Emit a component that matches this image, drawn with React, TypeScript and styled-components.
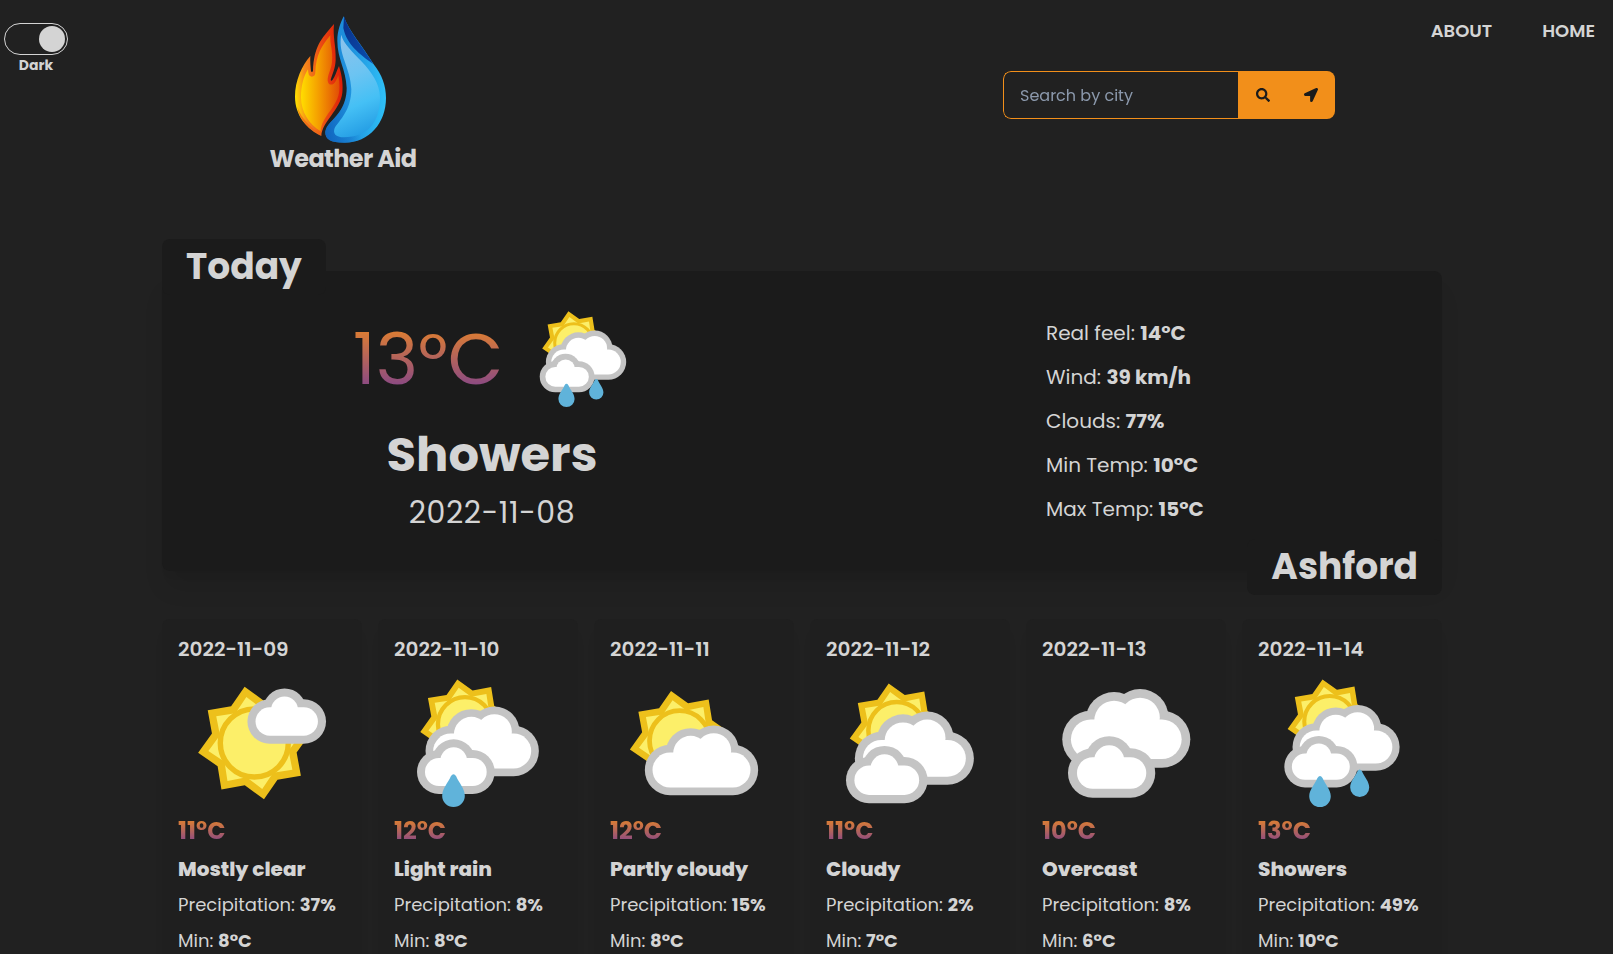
import React from "react";
import styled, { createGlobalStyle } from "styled-components";
import { FaLocationArrow, FaSearch } from "react-icons/fa";

const GlobalStyle = createGlobalStyle`
  *, *::before, *::after { box-sizing: border-box; }
  body {
    margin: 0;
    background: #212121;
    color: #d4d4d4;
    font-family: Poppins, Inter, "Liberation Sans", sans-serif;
  }
  h1, h2, h3, p, ul { margin: 0; padding: 0; }
`;

const Page = styled.div`
  height: 100vh;
  overflow: hidden;
  display: flex;
  flex-direction: column;
`;

/* ---------- header ---------- */

const Header = styled.header`
  height: 239px;
  flex: none;
  display: flex;
  align-items: flex-start;
  padding: 0 18px 0 4px;
`;

const ThemeSwitch = styled.div`
  width: 64px;
  margin-top: 23px;
  display: flex;
  flex-direction: column;
  align-items: center;
`;

const Track = styled.button`
  width: 64px;
  height: 32px;
  padding: 0 2px;
  border: 1px solid #d4d4d4;
  border-radius: 16px;
  background: transparent;
  display: flex;
  align-items: center;
  justify-content: flex-end;
`;

const Knob = styled.span`
  width: 26px;
  height: 26px;
  border-radius: 50%;
  background: #d4d4d4;
`;

const SwitchLabel = styled.span`
  font-size: 14px;
  font-weight: 700;
  line-height: 20px;
`;

const Brand = styled.div`
  width: 150px;
  margin: 10px 0 0 200px;
  display: flex;
  flex-direction: column;
  align-items: center;
`;

const BrandMark = styled.svg`
  width: 120px;
  height: 140px;
  margin-right: 6px;
`;

const BrandName = styled.h1`
  margin-top: -7px;
  font-size: 24px;
  font-weight: 700;
  line-height: 32px;
  letter-spacing: -0.6px;
  white-space: nowrap;
`;

const SearchForm = styled.form`
  width: 332px;
  height: 48px;
  margin: 71px 0 0 585px;
  display: flex;
  border-radius: 8px;
  overflow: hidden;
`;

const SearchInput = styled.input`
  width: 235px;
  border: 1px solid #f28f1a;
  border-right: 0;
  border-radius: 8px 0 0 8px;
  padding: 0 16px;
  background: transparent;
  color: #d4d4d4;
  font: inherit;
  font-size: 16px;
  outline: none;
  &::placeholder { color: #94a3b8; opacity: 0.92; }
`;

const SearchButton = styled.button`
  width: 49px;
  padding: 0 0 0 1px;
  border: 0;
  background: #f28f1a;
  color: #1b1b1b;
  font-size: 14px;
  display: flex;
  align-items: center;
  justify-content: center;
`;

const Nav = styled.nav`
  margin: 17px 0 0 auto;
  display: flex;
  gap: 50px;
`;

const NavLink = styled.a`
  font-size: 18px;
  font-weight: 600;
  line-height: 28px;
`;

/* ---------- today ---------- */

const Main = styled.main`
  width: 1280px;
  margin-left: 162px;
`;

const Today = styled.section`
  position: relative;
  height: 300px;
  margin-top: 32px;
  display: flex;
  padding: 40px 16px 0;
  border-radius: 8px;
  background: #1b1b1b;
  box-shadow: 0 20px 25px -5px rgba(0, 0, 0, 0.1), 0 8px 10px -6px rgba(0, 0, 0, 0.06);
`;

const Tab = styled.h2<{ $place: "top" | "bottom" }>`
  position: absolute;
  ${(p) => (p.$place === "top" ? "top: -32px; left: 0;" : "bottom: -24px; right: 0;")}
  height: 56px;
  padding: 0 24px;
  border-radius: 8px;
  background: #1b1b1b;
  font-size: 36px;
  font-weight: 700;
  line-height: 56px;
`;

const Summary = styled.div`
  width: 628px;
  display: flex;
  flex-direction: column;
  align-items: center;
`;

const SummaryRow = styled.div`
  display: flex;
  align-items: center;
  gap: 32px;
`;

const BigTemp = styled.p`
  font-size: 72px;
  font-weight: 400;
  line-height: 94px;
  white-space: nowrap;
  color: transparent;
  background: linear-gradient(#d97b36 22%, #8b4a83 78%);
  background-clip: text;
  -webkit-background-clip: text;
`;

const Condition = styled.p`
  margin-top: 12px;
  font-size: 48px;
  font-weight: 700;
  line-height: 72px;
`;

const TodayDate = styled.p`
  font-size: 30px;
  line-height: 44px;
  letter-spacing: 0.6px;
`;

const Details = styled.ul`
  margin-left: 240px;
  list-style: none;
`;

const Detail = styled.li`
  height: 44px;
  font-size: 20px;
  line-height: 44px;
  white-space: nowrap;
`;

/* ---------- forecast ---------- */

const Forecast = styled.section`
  margin-top: 48px;
  display: grid;
  grid-template-columns: repeat(6, 200px);
  gap: 16px;
`;

const DayCard = styled.article`
  height: 420px;
  padding: 16px;
  border-radius: 8px;
  background: #1f1f1f;
  box-shadow: 0 10px 15px -3px rgba(0, 0, 0, 0.03);
`;

const DayDate = styled.h3`
  font-size: 20px;
  font-weight: 600;
  line-height: 28px;
  margin-bottom: 16px;
`;

const DayIcon = styled.div`
  display: flex;
  justify-content: center;
`;

const DayTemp = styled.p`
  margin: 6px 0;
  width: max-content;
  font-size: 24px;
  font-weight: 700;
  line-height: 36px;
  color: transparent;
  background: linear-gradient(#d57a39 25%, #8f4c80 76%);
  background-clip: text;
  -webkit-background-clip: text;
`;

const DayCondition = styled.p`
  font-size: 20px;
  font-weight: 800;
  line-height: 28px;
`;

const DayStat = styled.p`
  margin-top: 8px;
  font-size: 18px;
  line-height: 28px;
  white-space: nowrap;
`;

/* ---------- weather drawings ---------- */

const IconSvg = styled.svg<{ $size: number }>`
  display: block;
  overflow: visible;
  width: ${(p) => p.$size}px;
  height: ${(p) => p.$size}px;
`;

const GOLD = "#edc01b";
const LEMON = "#fcef69";
const CLOUD_EDGE = "#c4c4c4";

function star(tip: number, valley: number) {
  const pts: string[] = [];
  for (let i = 0; i < 16; i++) {
    const a = ((-99.8 + i * 22.5) * Math.PI) / 180;
    const r = i % 2 === 0 ? tip : valley;
    pts.push(`${(r * Math.cos(a)).toFixed(2)},${(r * Math.sin(a)).toFixed(2)}`);
  }
  return pts.join(" ");
}

type Placed = { x: number; y: number; s?: number };

function Sun({ x, y, s = 1 }: Placed) {
  return (
    <g transform={`translate(${x} ${y}) scale(${s})`}>
      <polygon points={star(57, 43.4)} fill={GOLD} />
      <polygon points={star(46.6, 35.2)} fill={LEMON} />
      <circle r={34} fill={LEMON} stroke={GOLD} strokeWidth={5.4} />
    </g>
  );
}

function BigCloud({ x, y, s = 1 }: Placed) {
  const layer = (r: number, fill: string) => (
    <g fill={fill}>
      <rect x={-r} y={-r} width={189 + 2 * r} height={2 * r} rx={r} />
      <circle cx={62} cy={-50} r={r} />
      <circle cx={131} cy={-58} r={r} />
    </g>
  );
  return (
    <g transform={`translate(${x} ${y}) scale(${s / 3})`}>
      {layer(75.5, CLOUD_EDGE)}
      {layer(52.5, "#ffffff")}
    </g>
  );
}

function SmallCloud({ x, y, s = 1 }: Placed) {
  const layer = (grow: number, fill: string) => (
    <g fill={fill}>
      <rect x={-42 - grow} y={-42 - grow} width={185 + 2 * grow} height={84 + 2 * grow} rx={42 + grow} />
      <circle cx={44} cy={-34} r={40 + grow} />
    </g>
  );
  return (
    <g transform={`translate(${x} ${y}) scale(${s / 3})`}>
      {layer(24, CLOUD_EDGE)}
      {layer(0, "#ffffff")}
    </g>
  );
}

function Drop({ x, y, s = 1 }: Placed) {
  return (
    <path
      transform={`translate(${x} ${y}) scale(${s / 3})`}
      d="M-8 -58 Q0 -70 8 -58 C16 -38 34 -22 34 0 A34 34 0 0 1 -34 0 C-34 -22 -16 -38 -8 -58Z"
      fill="#60b3da"
    />
  );
}

type Sky = "clear" | "rain" | "partly" | "cloudy" | "overcast" | "showers";

const skies: Record<Sky, React.ReactNode> = {
  clear: (
    <>
      <Sun x={56.3} y={64} />
      <SmallCloud x={71.7} y={42.5} s={1.012} />
    </>
  ),
  rain: (
    <>
      <Sun x={51} y={45.2} s={0.796} />
      <BigCloud x={36.7} y={72} />
      <SmallCloud x={25} y={93} />
      <Drop x={39.5} y={116.7} />
    </>
  ),
  partly: (
    <>
      <Sun x={49.6} y={61.8} s={0.885} />
      <BigCloud x={40} y={91} />
    </>
  ),
  cloudy: (
    <>
      <Sun x={50.8} y={51.4} s={0.837} />
      <BigCloud x={35.3} y={79.3} s={1.05} />
      <SmallCloud x={23.1} y={101.2} s={1.05} />
    </>
  ),
  overcast: (
    <>
      <BigCloud x={28.7} y={60.3} s={1.13} />
      <SmallCloud x={30.7} y={94} s={1.124} />
    </>
  ),
  showers: (
    <>
      <Sun x={51.8} y={42.6} s={0.751} />
      <BigCloud x={38.3} y={68} s={0.945} />
      <SmallCloud x={27} y={87.7} s={0.94} />
      <Drop x={42} y={117.3} s={0.95} />
      <Drop x={81.7} y={108.5} s={0.84} />
    </>
  ),
};

function SkyIcon({ sky, size }: { sky: Sky; size: number }) {
  return (
    <IconSvg $size={size} viewBox="0 0 128 128" role="img" aria-label={sky}>
      {skies[sky]}
    </IconSvg>
  );
}

function Logo() {
  return (
    <BrandMark viewBox="0 0 360 420" aria-hidden="true">
      <defs>
        <linearGradient id="flameEdge" x1="0" y1="0.6" x2="1" y2="0.45">
          <stop offset="0" stopColor="#ffe000" />
          <stop offset="0.22" stopColor="#f58a1c" />
          <stop offset="0.6" stopColor="#ea4a12" />
          <stop offset="1" stopColor="#de1a06" />
        </linearGradient>
        <linearGradient id="flameBody" x1="0" y1="0" x2="1" y2="0">
          <stop offset="0" stopColor="#ffdd00" />
          <stop offset="0.45" stopColor="#f59f00" />
          <stop offset="1" stopColor="#e14c06" />
        </linearGradient>
        <linearGradient id="waterEdge" x1="0" y1="0.3" x2="1" y2="0.35">
          <stop offset="0" stopColor="#1c86d6" />
          <stop offset="0.45" stopColor="#1f93de" />
          <stop offset="1" stopColor="#2fc0f7" />
        </linearGradient>
        <linearGradient id="waterFoot" x1="0" y1="1" x2="0.7" y2="0.5">
          <stop offset="0" stopColor="#0f62bd" />
          <stop offset="0.6" stopColor="#0f62bd" stopOpacity="0" />
        </linearGradient>
        <linearGradient id="waterBody" x1="0.3" y1="0" x2="0.5" y2="1">
          <stop offset="0" stopColor="#8cc3ec" />
          <stop offset="0.4" stopColor="#6cc4f2" />
          <stop offset="0.7" stopColor="#45c0f5" />
          <stop offset="1" stopColor="#249de4" />
        </linearGradient>
        <linearGradient id="waterShade" x1="0" y1="0" x2="1" y2="1">
          <stop offset="0" stopColor="#0a2f8a" />
          <stop offset="1" stopColor="#0a50ae" />
        </linearGradient>
      </defs>
      <path
        d="M124 378 C82 358 45 318 45 260 C45 212 66 166 91 138 C90 156 92 170 93 184 Q96 189 99 183 C102 110 122 88 162 42 C158 84 168 104 167 150 C166 176 157 192 152 210 Q154 215 158 209 C166 200 168 186 177 168 C188 202 189 232 187 248 C181 300 126 334 124 378Z"
        fill="url(#flameEdge)"
      />
      <path
        d="M122 364 C88 344 63 306 63 262 C63 226 72 196 84 178 Q84 200 95 200 Q106 200 106 186 C108 136 124 108 151 76 C149 104 160 120 156 156 C154 178 142 196 143 212 Q146 228 160 222 Q168 216 175 196 C179 220 179 236 177 248 C168 296 124 320 122 364Z"
        fill="url(#flameBody)"
      />
      <path
        d="M52 290 C58 334 90 360 123 374 C92 350 66 330 52 290Z"
        fill="#f0601a"
        opacity="0.7"
      />
      <path
        d="M191 19 C206 62 250 112 281 163 C306 194 318 228 318 264 C318 338 268 398 194 398 C150 398 136 388 136 366 C138 344 160 332 178 306 C192 286 200 262 200 234 C198 176 172 148 172 92 C172 62 182 38 191 19Z"
        fill="url(#waterEdge)"
      />
      <path
        d="M191 19 C206 62 250 112 281 163 C306 194 318 228 318 264 C318 338 268 398 194 398 C150 398 136 388 136 366 C138 344 160 332 178 306 C192 286 200 262 200 234 C198 176 172 148 172 92 C172 62 182 38 191 19Z"
        fill="url(#waterFoot)"
      />
      <path d="M192 19 C204 62 250 112 280 162 C240 134 200 104 190 54Z" fill="url(#waterShade)" />
      <path
        d="M184 74 C194 126 300 176 300 262 C300 338 262 382 192 382 C166 382 158 370 164 354 C178 332 214 300 214 238 C212 172 172 132 184 74Z"
        fill="url(#waterBody)"
      />
    </BrandMark>
  );
}

/* ---------- data ---------- */

const details = [
  { label: "Real feel:", value: "14°C" },
  { label: "Wind:", value: "39 km/h" },
  { label: "Clouds:", value: "77%" },
  { label: "Min Temp:", value: "10°C" },
  { label: "Max Temp:", value: "15°C" },
];

const days: { date: string; sky: Sky; temp: number; text: string; rain: number; min: number }[] = [
  { date: "2022-11-09", sky: "clear", temp: 11, text: "Mostly clear", rain: 37, min: 8 },
  { date: "2022-11-10", sky: "rain", temp: 12, text: "Light rain", rain: 8, min: 8 },
  { date: "2022-11-11", sky: "partly", temp: 12, text: "Partly cloudy", rain: 15, min: 8 },
  { date: "2022-11-12", sky: "cloudy", temp: 11, text: "Cloudy", rain: 2, min: 7 },
  { date: "2022-11-13", sky: "overcast", temp: 10, text: "Overcast", rain: 8, min: 6 },
  { date: "2022-11-14", sky: "showers", temp: 13, text: "Showers", rain: 49, min: 10 },
];

export default function App() {
  return (
    <Page>
      <GlobalStyle />
      <Header>
        <ThemeSwitch>
          <Track type="button" aria-label="Toggle theme">
            <Knob />
          </Track>
          <SwitchLabel>Dark</SwitchLabel>
        </ThemeSwitch>
        <Brand>
          <Logo />
          <BrandName>Weather Aid</BrandName>
        </Brand>
        <SearchForm>
          <SearchInput placeholder="Search by city" />
          <SearchButton type="button" aria-label="Search">
            <FaSearch />
          </SearchButton>
          <SearchButton type="button" aria-label="Use my location">
            <FaLocationArrow />
          </SearchButton>
        </SearchForm>
        <Nav>
          <NavLink>ABOUT</NavLink>
          <NavLink>HOME</NavLink>
        </Nav>
      </Header>
      <Main>
        <Today>
          <Tab $place="top">Today</Tab>
          <Summary>
            <SummaryRow>
              <BigTemp>13°C</BigTemp>
              <SkyIcon sky="showers" size={96} />
            </SummaryRow>
            <Condition>Showers</Condition>
            <TodayDate>2022-11-08</TodayDate>
          </Summary>
          <Details>
            {details.map((d) => (
              <Detail key={d.label}>
                {d.label} <b>{d.value}</b>
              </Detail>
            ))}
          </Details>
          <Tab $place="bottom">Ashford</Tab>
        </Today>
        <Forecast>
          {days.map((d) => (
            <DayCard key={d.date}>
              <DayDate>{d.date}</DayDate>
              <DayIcon>
                <SkyIcon sky={d.sky} size={128} />
              </DayIcon>
              <DayTemp>{d.temp}°C</DayTemp>
              <DayCondition>{d.text}</DayCondition>
              <DayStat>
                Precipitation: <b>{d.rain}%</b>
              </DayStat>
              <DayStat>
                Min: <b>{d.min}°C</b>
              </DayStat>
            </DayCard>
          ))}
        </Forecast>
      </Main>
    </Page>
  );
}
